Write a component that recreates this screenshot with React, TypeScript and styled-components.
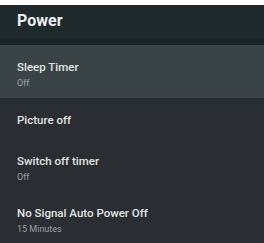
import React from "react";
import styled, { createGlobalStyle } from "styled-components";

const Global = createGlobalStyle`
  html, body { margin: 0; padding: 0; background: #ffffff; }
  body { font-family: Roboto, "Liberation Sans", sans-serif; }
`;

const Screen = styled.div`
  width: 264px;
  height: 243px;
  padding-top: 5px;
  box-sizing: border-box;
  background: #ffffff;
  overflow: hidden;
`;

const Panel = styled.div`
  height: 238px;
  background: #2a2d31;
  display: flex;
  flex-direction: column;
`;

const Header = styled.div`
  height: 35px;
  box-sizing: border-box;
  padding: 7px 17px 0;
  background: #1f292c;
  border-bottom: 6px solid #1a2326;
  box-sizing: content-box;
  height: 28px;
`;

const Title = styled.h1`
  margin: 0;
  font-size: 16px;
  font-weight: 700;
  line-height: 18px;
  color: #eceeee;
`;

const List = styled.div`
  display: flex;
  flex-direction: column;
`;

const Row = styled.div<{ $selected?: boolean; $h: number }>`
  height: ${(p) => p.$h}px;
  flex: none;
  box-sizing: border-box;
  padding: 15px 17px 0;
  background: ${(p) => (p.$selected ? "#3a4446" : "transparent")};
  display: flex;
  flex-direction: column;
  gap: 4px;
`;

const Label = styled.div`
  font-size: 11.5px;
  font-weight: 500;
  line-height: 14px;
  color: #e2e4e4;
`;

const Sub = styled.div`
  font-size: 9px;
  font-weight: 400;
  line-height: 11px;
  color: #9ca2a4;
`;

const items = [
  { label: "Sleep Timer", sub: "Off", h: 53, selected: true },
  { label: "Picture off", h: 41 },
  { label: "Switch off timer", sub: "Off", h: 52 },
  { label: "No Signal Auto Power Off", sub: "15 Minutes", h: 52 },
];

export default function App() {
  return (
    <>
      <Global />
      <Screen>
        <Panel>
          <Header>
            <Title>Power</Title>
          </Header>
          <List>
            {items.map((it) => (
              <Row key={it.label} $selected={it.selected} $h={it.h}>
                <Label>{it.label}</Label>
                {it.sub && <Sub>{it.sub}</Sub>}
              </Row>
            ))}
          </List>
        </Panel>
      </Screen>
    </>
  );
}
